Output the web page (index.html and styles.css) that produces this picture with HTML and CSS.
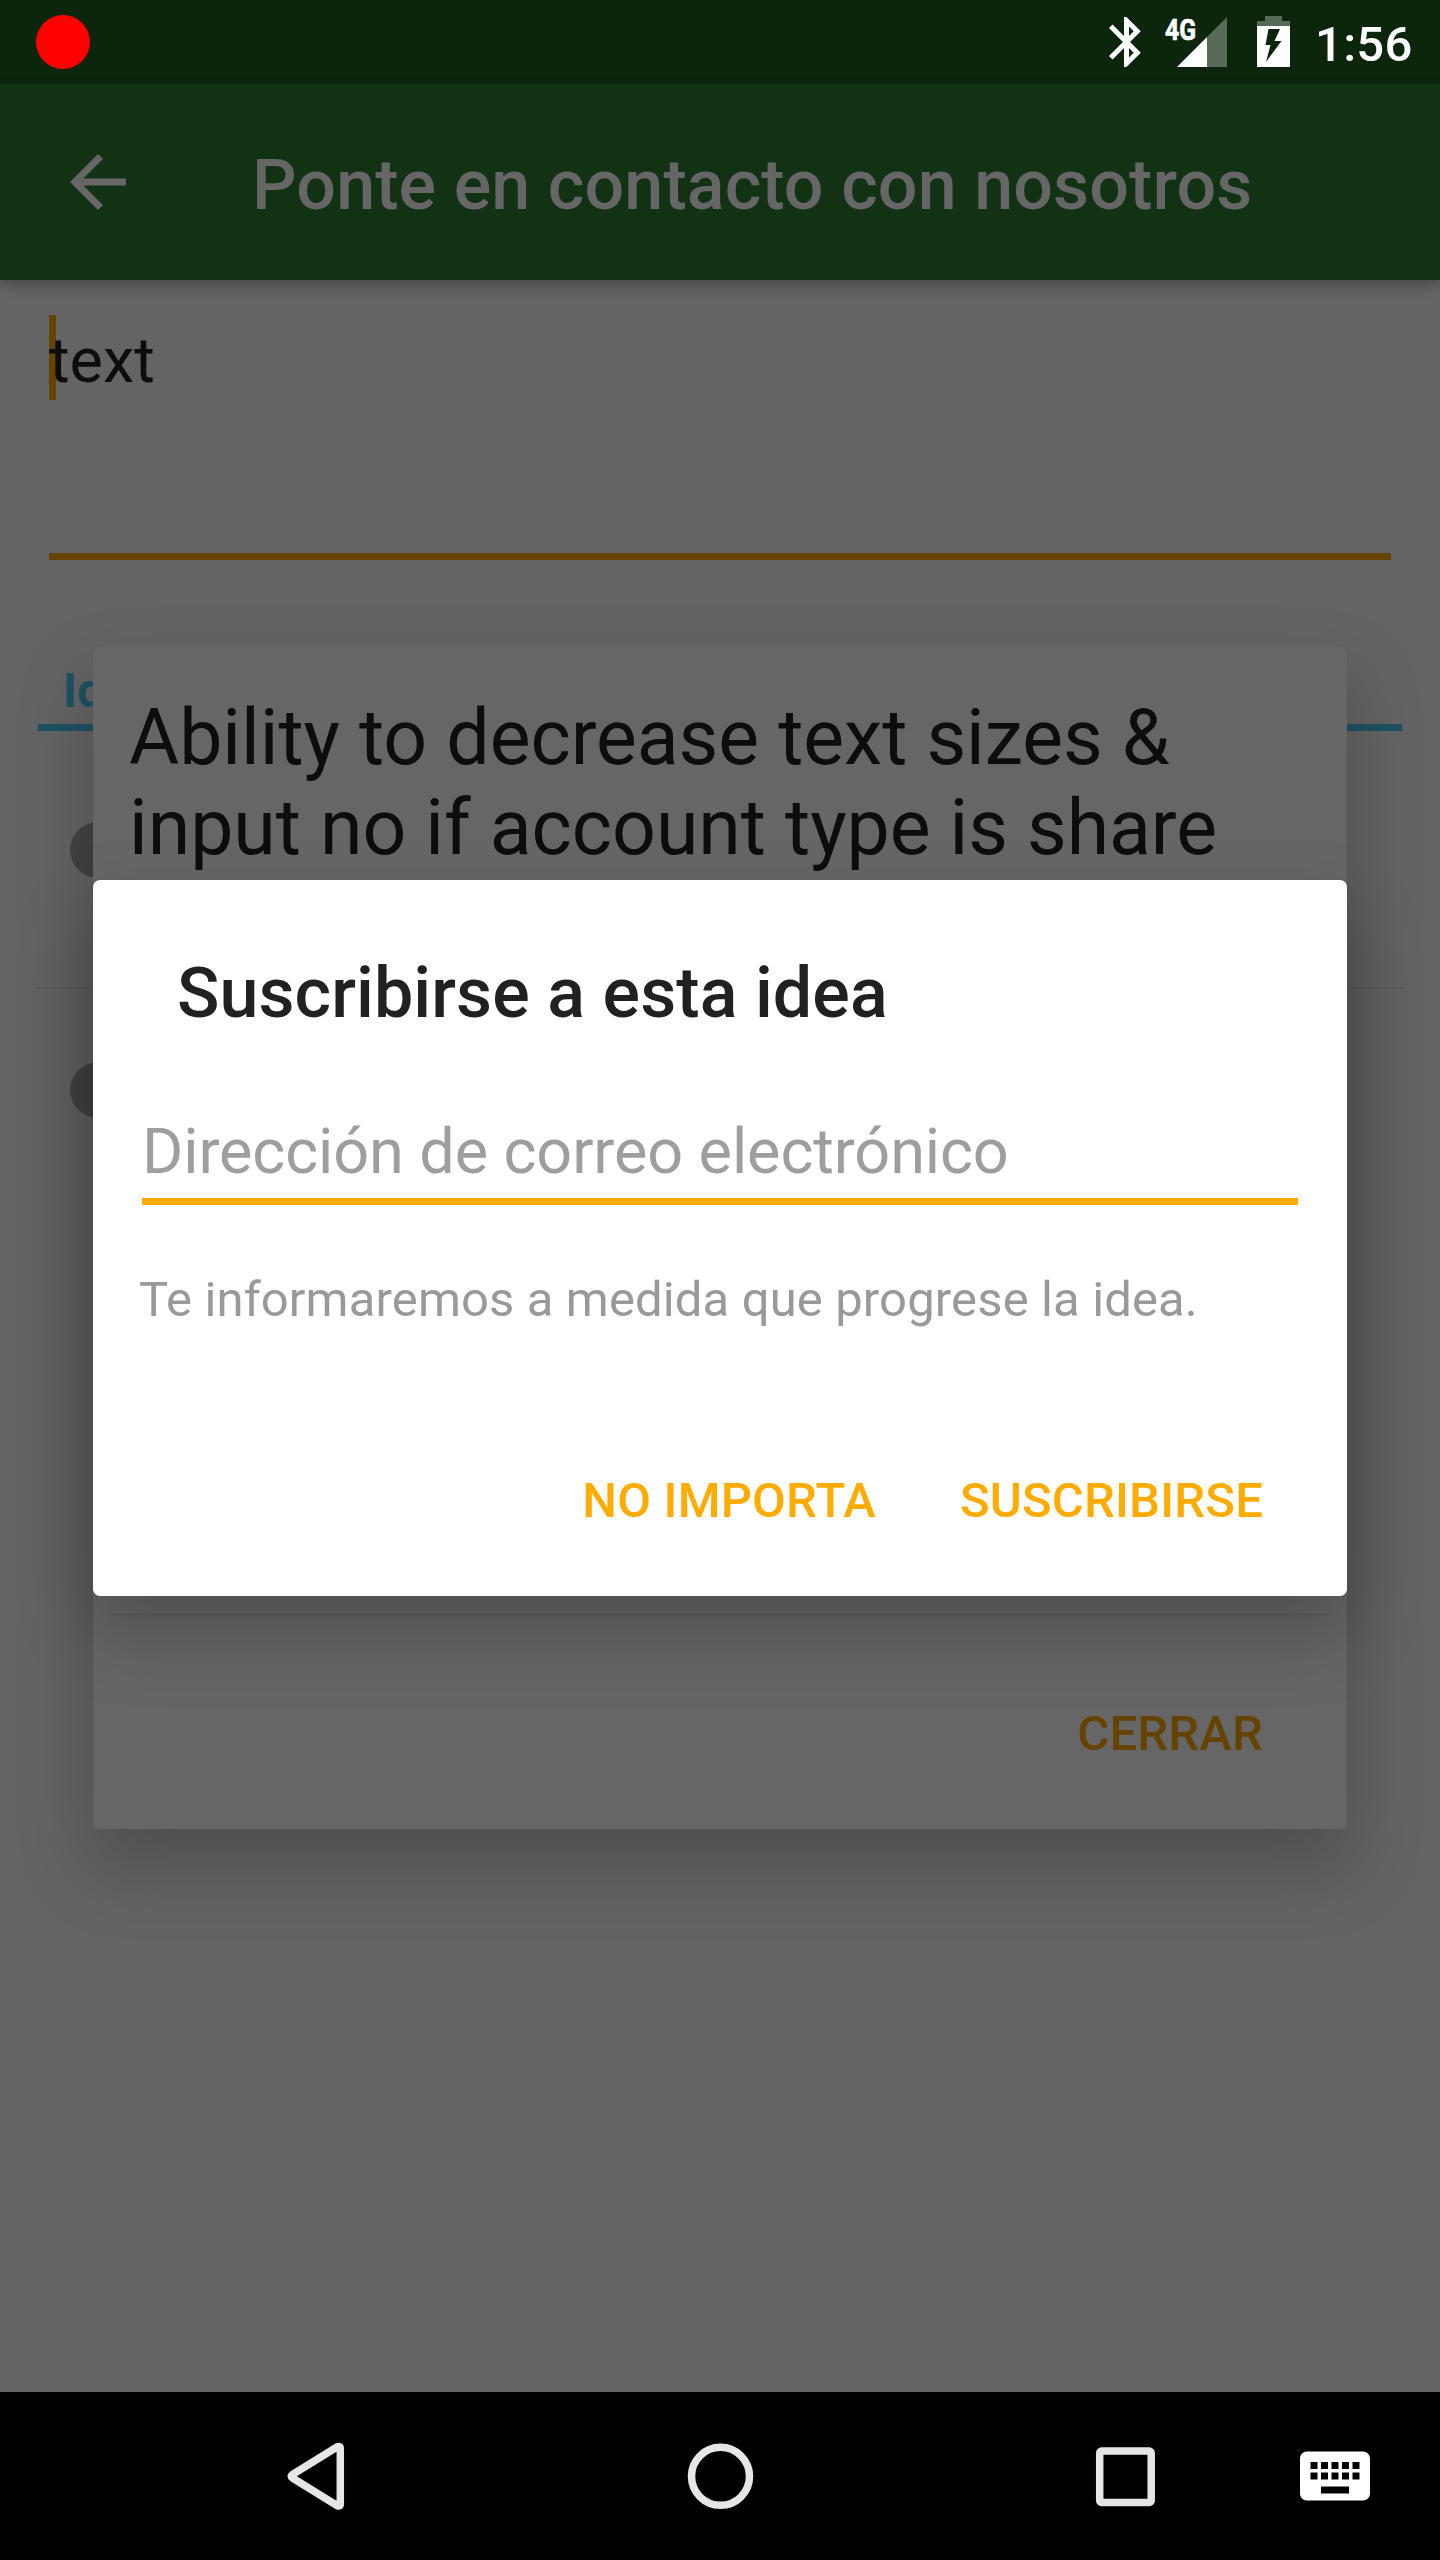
FILE: index.html
```html
<!DOCTYPE html>
<html lang="es">
<head>
<meta charset="utf-8">
<title>Ponte en contacto con nosotros</title>
<link rel="stylesheet" href="styles.css">
</head>
<body>
<div class="device">
  <header class="status-bar">
    <span class="record-dot"></span>
    <svg class="status-icons" width="190" height="84" viewBox="0 0 190 84">
      <path fill="#fff" transform="translate(-13.500 12) scale(2.500)" d="M17.710 7.710L12 2h-1v7.590L6.410 5 5 6.410 10.590 12 5 17.590 6.410 19 11 14.410V22h1l5.710-5.710-4.300-4.290 4.300-4.290zM13 5.830l1.880 1.880L13 9.590V5.830zm1.880 10.460L13 18.170v-3.760l1.880 1.880z"/>
      <path fill="#566b57" d="M97 37L117 17V67H97z"/>
      <path fill="#fff" d="M67 67L97 37V67z"/>
      <text class="network" x="55" y="39.5" textLength="31" lengthAdjust="spacingAndGlyphs">4G</text>
      <path fill="#566b57" d="M155 16h17v5h8v5h-33v-5h8z"/>
      <path fill="#fff" fill-rule="evenodd" d="M147 26h33v41h-33zM158.500 29L155.500 45H160.500L156 62L171.500 41H164.500L170 29z"/>
    </svg>
    <span class="clock">1:56</span>
  </header>
  <div class="app-bar">
    <svg class="back" width="84" height="84" viewBox="0 0 24 24"><path fill="#666" d="M20 11H7.830l5.590-5.590L12 4l-8 8 8 8 1.410-1.410L7.830 13H20v-2z"/></svg>
    <h1 class="app-title">Ponte en contacto con nosotros</h1>
  </div>
  <main class="page">
    <div class="message"><span class="caret"></span><span class="message-text">text</span></div>
    <h2 class="section">Ideas</h2>
    <div class="idea"><span class="avatar"></span></div>
    <div class="idea idea-last"><span class="avatar"></span></div>
  </main>
  <nav class="nav-bar">
    <div class="nav-key"><svg width="84" height="84" viewBox="0 0 84 84"><path class="key-line" d="M19.500 40.500L64 13Q67.300 11.500 67.300 14.500V70Q67.300 73 64 71.500L19.500 44Q17 42.200 19.500 40.500z"/></svg></div>
    <div class="nav-key"><svg width="84" height="84" viewBox="0 0 84 84"><circle class="key-line" cx="42.500" cy="42.300" r="29"/></svg></div>
    <div class="nav-key"><svg width="84" height="84" viewBox="0 0 84 84"><rect class="key-line" x="16.700" y="17" width="51.500" height="51.500" rx="2"/></svg></div>
    <div class="nav-key nav-keyboard"><svg width="84" height="84" viewBox="0 0 24 24"><path fill="#fff" d="M20 5H4c-1.100 0-1.990.9-1.990 2L2 17c0 1.100.9 2 2 2h16c1.100 0 2-.9 2-2V7c0-1.100-.9-2-2-2zm-9 3h2v2h-2V8zm0 3h2v2h-2v-2zM8 8h2v2H8V8zm0 3h2v2H8v-2zm-1 2H5v-2h2v2zm0-3H5V8h2v2zm9 7H8v-2h8v2zm0-4h-2v-2h2v2zm0-3h-2V8h2v2zm3 3h-2v-2h2v2zm0-3h-2V8h2v2z"/></svg></div>
  </nav>

  <section class="dialog idea-dialog">
    <div class="idea-body">Ability to decrease text sizes &amp;<br>input no if account type is share</div>
    <div class="actions"><span>CERRAR</span></div>
  </section>

  <section class="dialog subscribe-dialog">
    <h2 class="dialog-title">Suscribirse a esta idea</h2>
    <div class="email">Dirección de correo electrónico</div>
    <p class="helper">Te informaremos a medida que progrese la idea.</p>
    <div class="actions"><span>NO IMPORTA</span><span>SUSCRIBIRSE</span></div>
  </section>
</div>
</body>
</html>
```
FILE: styles.css
```css
* { box-sizing: border-box; }
body { margin: 0; font-family: Roboto, "Noto Sans", sans-serif; }
h1, h2, p { margin: 0; font-weight: 500; }
svg { display: block; flex: none; }

.device {
  position: relative;
  display: flex;
  flex-direction: column;
  width: 1440px;
  height: 2560px;
  overflow: hidden;
  background: #646464;
}

.status-bar {
  display: flex;
  align-items: center;
  height: 84px;
  padding: 0 26px 0 36px;
  background: #0b260d;
}
.record-dot { width: 54px; height: 54px; border-radius: 50%; background: #f00; }
.status-icons { margin-left: auto; overflow: visible; }
.network { font-size: 29.5px; font-weight: 700; fill: #fff; stroke: #fff; stroke-width: .7; }
.clock { width: 98px; margin-left: 16px; padding-top: 5px; font-size: 49px; font-weight: 500; line-height: 60px; letter-spacing: .3px; text-indent: -1px; color: #fff; }

.app-bar {
  display: flex;
  align-items: center;
  height: 196px;
  padding-left: 56px;
  gap: 112px;
  background: #123214;
  box-shadow: 0 5px 12px rgba(0, 0, 0, .28);
  z-index: 1;
}
.app-title { padding-top: 6px; font-size: 70px; line-height: 84px; letter-spacing: .1px; white-space: nowrap; color: #666; }

.page { flex: 1; padding-top: 35px; }
.message { position: relative; height: 245px; margin: 0 49px; border-bottom: 7px solid #640; }
.caret { position: absolute; left: 0; top: 0; width: 7px; height: 85px; background: #640; }
.message-text { position: relative; display: block; padding-top: 1px; font-size: 63px; line-height: 90px; color: #0d0d0d; }
.section {
  margin: 98px 38px 0;
  padding-left: 25px;
  border-bottom: 7px solid #1e5263;
  font-size: 49px;
  font-weight: 700;
  line-height: 66px;
  color: #1e5263;
}
.idea { height: 257px; margin: 0 35px; padding: 91px 0 0 35px; border-bottom: 1px solid #595959; }
.idea-last { padding-top: 74px; border-bottom: 0; }
.avatar { display: block; width: 56px; height: 56px; border-radius: 50%; background: #444; }

.nav-bar { display: flex; height: 168px; padding-left: 175px; background: #000; }
.nav-key { display: flex; align-items: center; justify-content: center; width: 280px; margin-right: 125px; }
.nav-key:nth-child(3) { margin-right: 0; }
.nav-keyboard { width: 140px; margin-right: 0; }
.key-line { fill: none; stroke: #e6e6e6; stroke-width: 7.500; stroke-linejoin: round; }

.dialog {
  position: absolute;
  left: 93px;
  display: flex;
  flex-direction: column;
  width: 1254px;
  border-radius: 7px;
  box-shadow: 0 35px 70px 6px rgba(0, 0, 0, .21);
  z-index: 2;
}
.idea-dialog { top: 647px; height: 1182px; background: #666; }
.idea-body {
  height: 968px;
  margin: 0 18px;
  padding: 46px 0 0 18px;
  border-bottom: 1px solid #5c5c5c;
  font-size: 77px;
  line-height: 90px;
  letter-spacing: -.05px;
  white-space: nowrap;
  color: #0d0d0d;
}
.subscribe-dialog { top: 880px; height: 716px; padding-top: 72px; background: #fff; }
.dialog-title { padding-left: 84px; font-size: 70px; line-height: 82px; letter-spacing: .08px; color: #212121; }
.email {
  height: 95px;
  margin: 76px 49px 0;
  border-bottom: 7px solid #ffab00;
  font-size: 63px;
  line-height: 83px;
  letter-spacing: -.12px;
  color: #9e9e9e;
}
.helper { margin-top: 66px; padding-left: 46px; font-size: 49px; font-weight: 400; line-height: 58px; letter-spacing: .13px; color: #999; }
.actions {
  display: flex;
  justify-content: flex-end;
  gap: 84px;
  margin-top: auto;
  padding: 0 84px 62px 0;
  font-size: 49px;
  font-weight: 500;
  line-height: 66px;
  letter-spacing: .18px;
  color: #ffab00;
}
.idea-dialog .actions { color: #640; }
```
